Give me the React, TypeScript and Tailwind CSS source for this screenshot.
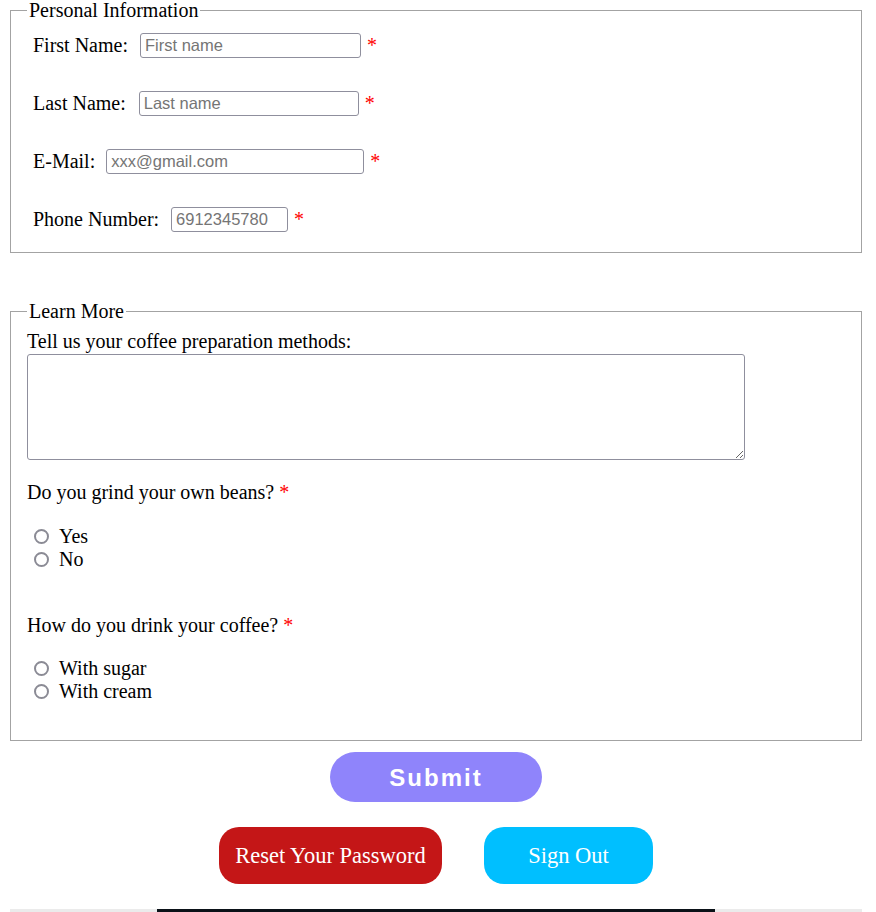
import React from "react";

const Star = ({ className = "" }: { className?: string }) => (
  <span className={`text-[#ff0000] ${className}`}>*</span>
);

const personal = [
  { id: "first", label: "First Name:", placeholder: "First name", type: "text", width: "w-[221px]", gap: "mr-[12px]" },
  { id: "last", label: "Last Name:", placeholder: "Last name", type: "text", width: "w-[220px]", gap: "mr-[13px]" },
  { id: "email", label: "E-Mail:", placeholder: "xxx@gmail.com", type: "email", width: "w-[258px]", gap: "mr-[11px]" },
  { id: "phone", label: "Phone Number:", placeholder: "6912345780", type: "tel", width: "w-[117px]", gap: "mr-[12px]" },
];

const RadioGroup = ({ name, options, className }: { name: string; options: string[]; className: string }) => (
  <div className={className}>
    {options.map((opt) => (
      <label key={opt} className="flex items-center h-[23px]">
        <input
          type="radio"
          name={name}
          className="appearance-none m-0 ml-[7px] mr-[10px] w-[15px] h-[15px] rounded-full border-2 border-[#8b8b95] bg-white"
        />
        {opt}
      </label>
    ))}
  </div>
);

export default function App() {
  return (
    <div className="min-h-[912px] bg-white text-black text-[20px] leading-[23px] font-['Liberation_Serif',serif]">
      <div className="w-[852px] ml-[10px]">
        <fieldset className="border border-[#a3a3a3] px-[16px] pt-[7px] pb-[20px]">
          <legend className="px-[2px] leading-[20px]">Personal Information</legend>
          <div className="mt-[6px] flex flex-col gap-[33px] ml-[6px]">
            {personal.map((f) => (
              <div key={f.id} className="flex items-center h-[25px]">
                <label htmlFor={f.id} className={f.gap}>
                  {f.label}
                </label>
                <input
                  id={f.id}
                  type={f.type}
                  placeholder={f.placeholder}
                  className={`${f.width} h-[25px] border border-[#8f8f9d] rounded-[3px] px-[4px] text-[16.5px] font-['Liberation_Sans',sans-serif] placeholder:text-[#757575] outline-none`}
                />
                <Star className="ml-[6px]" />
              </div>
            ))}
          </div>
        </fieldset>

        <fieldset className="mt-[48px] border border-[#a3a3a3] px-[16px] pt-[7px] pb-[37px]">
          <legend className="px-[2px] leading-[20px]">Learn More</legend>
          <label htmlFor="methods" className="block mt-[2px]">
            Tell us your coffee preparation methods:
          </label>
          <textarea
            id="methods"
            className="block mt-[1px] w-[718px] h-[106px] border border-[#8f8f9d] rounded-[3px] outline-none"
          />

          <p className="mt-[21px]">
            Do you grind your own beans? <Star />
          </p>
          <RadioGroup name="grind" options={["Yes", "No"]} className="mt-[21px]" />

          <p className="mt-[43px]">
            How do you drink your coffee? <Star />
          </p>
          <RadioGroup name="drink" options={["With sugar", "With cream"]} className="mt-[20px]" />
        </fieldset>

        <div className="flex justify-center mt-[11px]">
          <button className="w-[212px] h-[50px] rounded-full bg-[#8f84fb] text-white text-[24px] font-bold tracking-[2px] font-['Liberation_Sans',sans-serif]">
            Submit
          </button>
        </div>

        <div className="flex justify-center gap-[42px] mt-[25px]">
          <button className="w-[223px] h-[57px] rounded-[20px] bg-[#c41617] text-white text-[22.5px]">
            Reset Your Password
          </button>
          <button className="w-[169px] h-[57px] rounded-[20px] bg-[#00bfff] text-white text-[22.5px]">
            Sign Out
          </button>
        </div>

        <div className="mt-[25px] h-[3px] bg-[#ebebeb] flex justify-center">
          <div className="w-[558px] h-[3px] bg-[#0b1218]" />
        </div>
      </div>
    </div>
  );
}
